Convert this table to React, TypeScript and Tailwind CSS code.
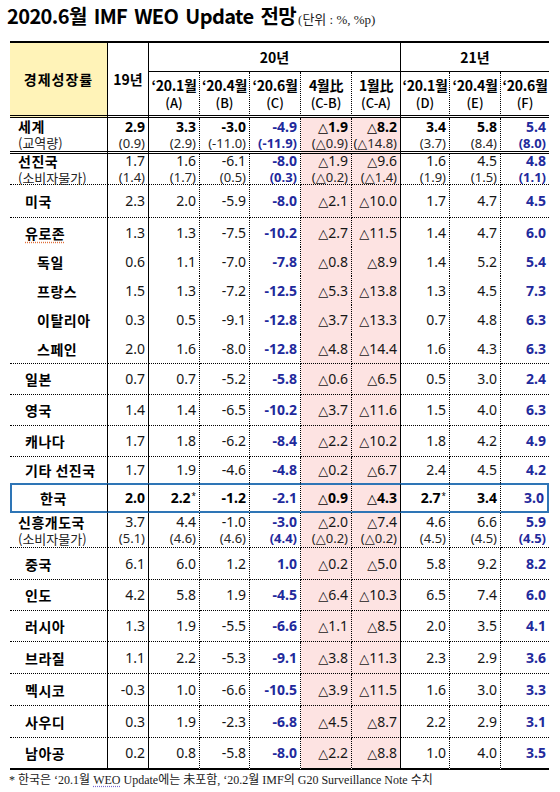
import React from "react";

type Row = {
  label: string;
  sub?: string;
  pad: string;
  h: string;
  v: string[];
  s?: string[];
  bold?: boolean;
  star?: number[];
  tight?: boolean;
  bottom: "dot" | "none" | "dbl" | "solid" | "kr";
  squiggle?: boolean;
};

const rows: Row[] = [
  { label: "세계", sub: "(교역량)", pad: "pl-[8px]", h: "h-[34px]", bold: true, bottom: "dbl",
    v: ["2.9", "3.3", "-3.0", "-4.9", "△1.9", "△8.2", "3.4", "5.8", "5.4"],
    s: ["(0.9)", "(2.9)", "(-11.0)", "(-11.9)", "(△0.9)", "(△14.8)", "(3.7)", "(8.4)", "(8.0)"] },
  { label: "선진국", sub: "(소비자물가)", pad: "pl-[8px]", h: "h-[31px]", bottom: "dot", tight: true,
    v: ["1.7", "1.6", "-6.1", "-8.0", "△1.9", "△9.6", "1.6", "4.5", "4.8"],
    s: ["(1.4)", "(1.7)", "(0.5)", "(0.3)", "(△0.2)", "(△1.4)", "(1.9)", "(1.5)", "(1.1)"] },
  { label: "미국", pad: "pl-[15px]", h: "h-[33px]", bottom: "dot",
    v: ["2.3", "2.0", "-5.9", "-8.0", "△2.1", "△10.0", "1.7", "4.7", "4.5"] },
  { label: "유로존", pad: "pl-[15px]", h: "h-[29px]", bottom: "none", squiggle: true,
    v: ["1.3", "1.3", "-7.5", "-10.2", "△2.7", "△11.5", "1.4", "4.7", "6.0"] },
  { label: "독일", pad: "pl-[27px]", h: "h-[29px]", bottom: "none",
    v: ["0.6", "1.1", "-7.0", "-7.8", "△0.8", "△8.9", "1.4", "5.2", "5.4"] },
  { label: "프랑스", pad: "pl-[27px]", h: "h-[29px]", bottom: "none",
    v: ["1.5", "1.3", "-7.2", "-12.5", "△5.3", "△13.8", "1.3", "4.5", "7.3"] },
  { label: "이탈리아", pad: "pl-[27px]", h: "h-[29px]", bottom: "none",
    v: ["0.3", "0.5", "-9.1", "-12.8", "△3.7", "△13.3", "0.7", "4.8", "6.3"] },
  { label: "스페인", pad: "pl-[27px]", h: "h-[30px]", bottom: "dot",
    v: ["2.0", "1.6", "-8.0", "-12.8", "△4.8", "△14.4", "1.6", "4.3", "6.3"] },
  { label: "일본", pad: "pl-[15px]", h: "h-[31px]", bottom: "dot",
    v: ["0.7", "0.7", "-5.2", "-5.8", "△0.6", "△6.5", "0.5", "3.0", "2.4"] },
  { label: "영국", pad: "pl-[15px]", h: "h-[31px]", bottom: "dot",
    v: ["1.4", "1.4", "-6.5", "-10.2", "△3.7", "△11.6", "1.5", "4.0", "6.3"] },
  { label: "캐나다", pad: "pl-[15px]", h: "h-[31px]", bottom: "dot",
    v: ["1.7", "1.8", "-6.2", "-8.4", "△2.2", "△10.2", "1.8", "4.2", "4.9"] },
  { label: "기타 선진국", pad: "pl-[15px]", h: "h-[26px]", bottom: "none",
    v: ["1.7", "1.9", "-4.6", "-4.8", "△0.2", "△6.7", "2.4", "4.5", "4.2"] },
  { label: "한국", pad: "pl-[28px]", h: "h-[30px]", bold: true, bottom: "kr", star: [1, 6],
    v: ["2.0", "2.2", "-1.2", "-2.1", "△0.9", "△4.3", "2.7", "3.4", "3.0"] },
  { label: "신흥개도국", sub: "(소비자물가)", pad: "pl-[8px]", h: "h-[35px]", bottom: "dot",
    v: ["3.7", "4.4", "-1.0", "-3.0", "△2.0", "△7.4", "4.6", "6.6", "5.9"],
    s: ["(5.1)", "(4.6)", "(4.6)", "(4.4)", "(△0.2)", "(△0.2)", "(4.5)", "(4.5)", "(4.5)"] },
  { label: "중국", pad: "pl-[15px]", h: "h-[32px]", bottom: "dot",
    v: ["6.1", "6.0", "1.2", "1.0", "△0.2", "△5.0", "5.8", "9.2", "8.2"] },
  { label: "인도", pad: "pl-[15px]", h: "h-[31px]", bottom: "dot",
    v: ["4.2", "5.8", "1.9", "-4.5", "△6.4", "△10.3", "6.5", "7.4", "6.0"] },
  { label: "러시아", pad: "pl-[15px]", h: "h-[31px]", bottom: "dot",
    v: ["1.3", "1.9", "-5.5", "-6.6", "△1.1", "△8.5", "2.0", "3.5", "4.1"] },
  { label: "브라질", pad: "pl-[15px]", h: "h-[32px]", bottom: "dot",
    v: ["1.1", "2.2", "-5.3", "-9.1", "△3.8", "△11.3", "2.3", "2.9", "3.6"] },
  { label: "멕시코", pad: "pl-[15px]", h: "h-[32px]", bottom: "dot",
    v: ["-0.3", "1.0", "-6.6", "-10.5", "△3.9", "△11.5", "1.6", "3.0", "3.3"] },
  { label: "사우디", pad: "pl-[15px]", h: "h-[32px]", bottom: "dot",
    v: ["0.3", "1.9", "-2.3", "-6.8", "△4.5", "△8.7", "2.2", "2.9", "3.1"] },
  { label: "남아공", pad: "pl-[15px]", h: "h-[32px]", bottom: "solid",
    v: ["0.2", "0.8", "-5.8", "-8.0", "△2.2", "△8.8", "1.0", "4.0", "3.5"] },
];

// right border of the 9 number columns
const rightLine = [
  "border-r border-r-black",
  "border-r border-r-black [border-right-style:dotted]",
  "border-r border-r-black [border-right-style:dotted]",
  "border-r border-r-black [border-right-style:dotted]",
  "border-r border-r-black [border-right-style:dotted]",
  "border-r border-r-black",
  "border-r border-r-black [border-right-style:dotted]",
  "border-r border-r-black [border-right-style:dotted]",
  "",
];

const bottomLine = {
  dot: "border-b border-b-black [border-bottom-style:dotted]",
  none: "",
  dbl: "border-b-[3px] border-b-black [border-bottom-style:double]",
  solid: "border-b-2 border-b-black",
  kr: "border-y-2 border-y-[#2e75b6]",
};

const headers = [
  ["‘20.1월", "(A)"],
  ["‘20.4월", "(B)"],
  ["‘20.6월", "(C)"],
  ["4월比", "(C-B)"],
  ["1월比", "(C-A)"],
  ["‘20.1월", "(D)"],
  ["‘20.4월", "(E)"],
  ["‘20.6월", "(F)"],
];

// the triangle glyph runs large in the fallback font, so set it a touch smaller
function Val({ text }: { text: string }) {
  if (!text.includes("△")) return <>{text}</>;
  const [pre, post] = text.split("△");
  return (
    <>
      {pre}
      <span className="text-[13px]">△</span>
      {post}
    </>
  );
}

function NumCell({ row, i }: { row: Row; i: number }) {
  const blue = i === 3 || i === 8;
  const pink = i === 4 || i === 5;
  const main = blue
    ? "font-bold text-[#1f2a9c]"
    : row.bold
      ? "font-bold text-black"
      : "text-[#161616]";
  const sub = blue ? "font-bold text-[#1f2a9c]" : "text-[#262626]";
  const last = i === 8 && row.bottom === "kr" ? "border-r-2 border-r-[#2e75b6]" : rightLine[i];
  return (
    <td
      className={`${row.h} ${last} ${bottomLine[row.bottom]} ${pink ? "bg-[#fde3e2]" : ""} p-0 pr-[3px] text-right align-middle`}
    >
      <div className={`flex flex-col items-end justify-center ${row.tight ? "h-[30px]" : ""}`}>
        <span className={`text-[14px] leading-[16px] ${main}`}>
          <Val text={row.v[i]} />
          {row.star?.includes(i) && <sup className="ml-[1px] text-[8px] font-normal">*</sup>}
        </span>
        {row.s && (
          <span className={`text-[13px] leading-[16px] ${sub}`}>
            <Val text={row.s[i]} />
          </span>
        )}
      </div>
    </td>
  );
}

export default function App() {
  return (
    <div className="h-[792px] w-[560px] bg-white font-['Noto_Sans','DejaVu_Sans','Noto_Sans_CJK_KR',sans-serif] text-black">
      <div className="flex h-[41px] items-baseline pl-[7px] pt-[2px]">
        <span className="font-['Noto_Sans_CJK_KR',sans-serif] text-[20px] font-bold leading-[27px] tracking-[-0.6px] [word-spacing:3px]">
          2020.6월 IMF WEO Update 전망
        </span>
        <span className="ml-[2px] font-['Liberation_Serif','Noto_Sans_CJK_KR',serif] text-[13px] text-[#222]">
          (단위 : %, %p)
        </span>
      </div>

      <table className="ml-[10px] w-[539px] table-fixed border-separate border-spacing-0">
        <colgroup>
          <col className="w-[98px]" />
          <col className="w-[41px]" />
          <col className="w-[51px]" />
          <col className="w-[50px]" />
          <col className="w-[51px]" />
          <col className="w-[51px]" />
          <col className="w-[49px]" />
          <col className="w-[49px]" />
          <col className="w-[51px]" />
          <col className="w-[48px]" />
        </colgroup>
        <thead>
          <tr>
            <th
              rowSpan={2}
              className="border-t-2 border-r border-b-[3px] border-t-black border-r-black border-b-black bg-[#fff3b8] p-0 font-['Noto_Sans_CJK_KR',sans-serif] text-[14px] font-bold tracking-[1px] [border-bottom-style:double]"
            >
              경제성장률
            </th>
            <th
              rowSpan={2}
              className="border-t-2 border-r border-b-[3px] border-t-black border-r-black border-b-black p-0 font-['Noto_Sans_CJK_KR',sans-serif] text-[14px] font-bold [border-bottom-style:double]"
            >
              19년
            </th>
            <th
              colSpan={5}
              className="h-[31px] border-t-2 border-r border-b border-black p-0 font-['Noto_Sans_CJK_KR',sans-serif] text-[14px] font-bold"
            >
              20년
            </th>
            <th
              colSpan={3}
              className="border-t-2 border-b border-t-black border-b-black p-0 font-['Noto_Sans_CJK_KR',sans-serif] text-[14px] font-bold"
            >
              21년
            </th>
          </tr>
          <tr>
            {headers.map((hd, i) => (
              <th
                key={i}
                className={`h-[46px] ${rightLine[i + 1]} border-b-[3px] border-b-black p-0 font-['Noto_Sans_CJK_KR',sans-serif] [border-bottom-style:double]`}
              >
                <div className="text-[14px] leading-[17px] font-bold tracking-[-0.3px]">{hd[0]}</div>
                <div className="text-[13px] leading-[17px] font-medium">{hd[1]}</div>
              </th>
            ))}
          </tr>
        </thead>
        <tbody>
          {rows.map((row) => (
            <tr key={row.label}>
              <td
                className={`${row.h} ${row.pad} ${bottomLine[row.bottom]} ${row.bottom === "kr" ? "border-l-2 border-l-[#2e75b6]" : ""} border-r border-r-black p-0 align-middle font-['Noto_Sans_CJK_KR',sans-serif]`}
              >
                <div className={`flex flex-col items-start justify-center ${row.tight ? "h-[30px]" : ""}`}>
                  <span
                    className={`text-[14px] font-bold leading-[16px] tracking-[0.5px] ${row.squiggle ? "underline decoration-[#e0703a] decoration-dotted underline-offset-[3px]" : ""}`}
                  >
                    {row.label}
                  </span>
                  {row.sub && <span className="text-[13px] leading-[17px] text-[#222]">{row.sub}</span>}
                </div>
              </td>
              {row.v.map((_, i) => (
                <NumCell key={i} row={row} i={i} />
              ))}
            </tr>
          ))}
        </tbody>
      </table>

      <div className="mt-[2px] pl-[9px] font-['Liberation_Serif','Noto_Sans_CJK_KR',serif] text-[12px] leading-[16px] text-[#1a1a1a]">
        * 한국은 ‘20.1월 <span className="underline decoration-[#7a6ad0] decoration-dotted underline-offset-2">WEO</span> Update에는 未포함, ‘20.2월 IMF의 G20 Surveillance Note 수치
      </div>
    </div>
  );
}
